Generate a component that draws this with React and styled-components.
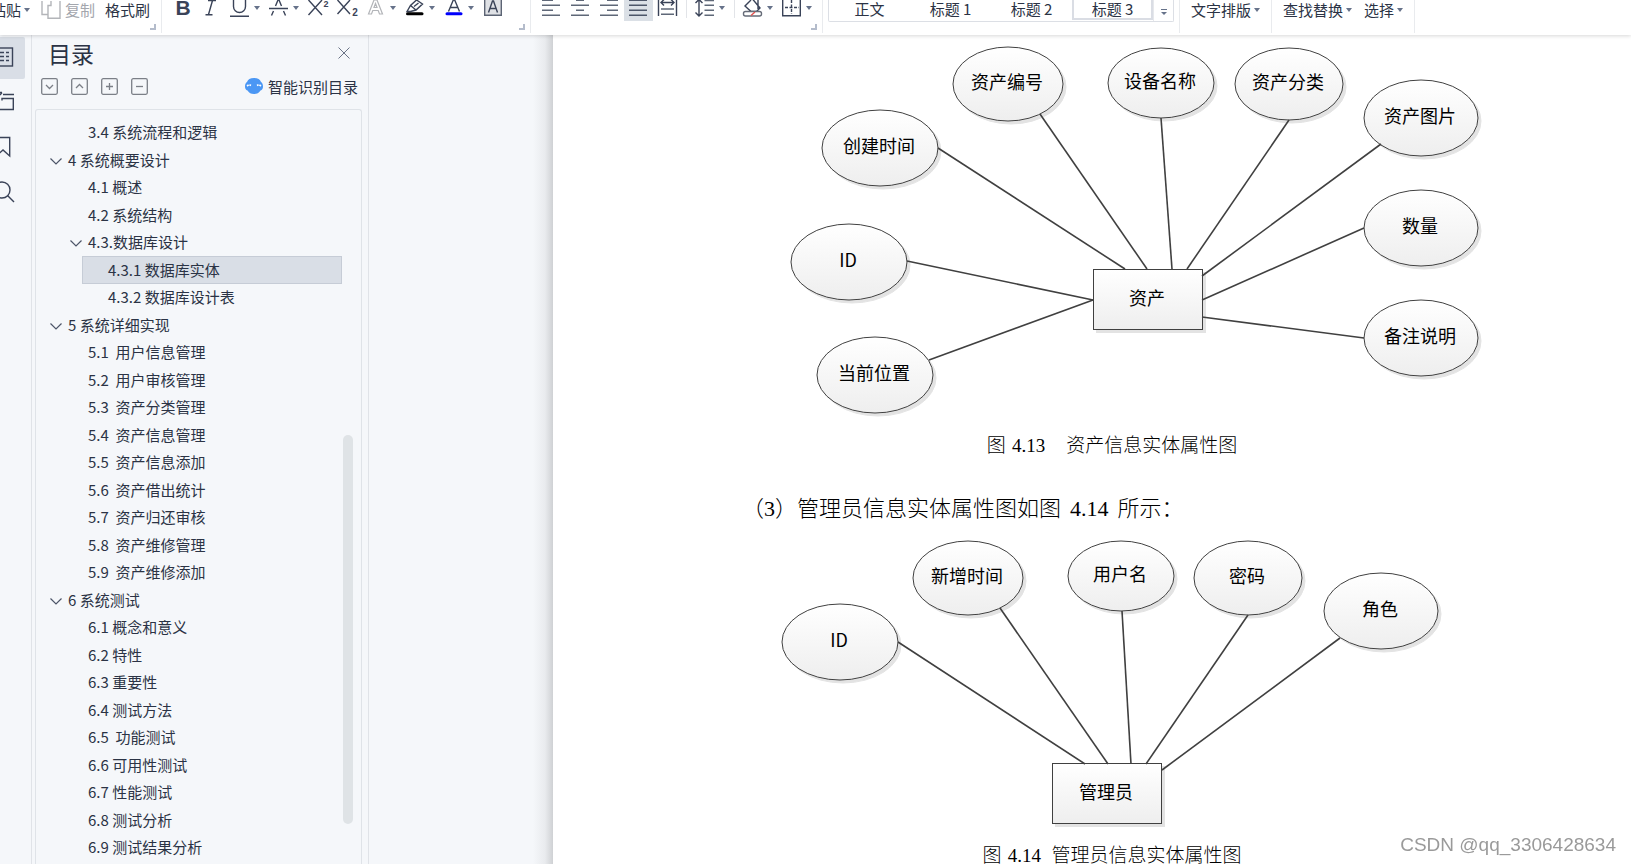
import React from 'react';
import styled, { createGlobalStyle } from 'styled-components';

const GlobalStyle = createGlobalStyle`
  * {
    box-sizing: border-box;
  }

  body {
    margin: 0;
    overflow: hidden;
    background: #f5f7fa;
    color: #2b3345;
    font-family: 'Noto Sans CJK SC', sans-serif;
    font-size: 15px;
  }

  button {
    font: inherit;
    color: inherit;
    background: none;
    border: none;
    padding: 0;
    margin: 0;
    cursor: pointer;
  }

  svg {
    display: block;
    flex: none;
  }
`;

const Main = styled.div`
  height: 100vh;
  display: flex;
  flex-direction: column;
  overflow: hidden;
`;

/* ---------- ribbon ---------- */

const Ribbon = styled.header`
  position: relative;
  z-index: 1;
  flex: none;
  display: flex;
  height: 35px;
  background: #fff;
  box-shadow: 0 1px 4px rgba(0, 0, 0, .16);
`;

const Group = styled.div`
  position: relative;
  display: flex;
  align-items: flex-start;
  height: 33px;
  padding-left: ${(props) => props.$start || 0}px;
  padding-right: ${(props) => props.$end || 0}px;
  border-right: 1px solid #e9ebee;
  white-space: nowrap;
`;

const Launcher = styled.button`
  position: absolute;
  right: 5px;
  bottom: 3px;
  width: 6px;
  height: 6px;
  border-right: 2px solid #b4bccb;
  border-bottom: 2px solid #b4bccb;
`;

const TextTool = styled.button`
  display: flex;
  align-items: center;
  gap: 3px;
  height: 20px;
  line-height: 20px;
  margin-right: ${(props) => props.$gap || 11}px;
  color: ${(props) => (props.disabled ? '#a3a6ad' : '#2b3345')};
`;

const PasteTool = styled(TextTool)`
  margin-left: -9px;
`;

const IconTool = styled.button`
  width: ${(props) => (props.$menu ? 39 : 29)}px;
  height: 21px;
  background: ${(props) => (props.$active ? '#dbe0e6' : 'none')};
`;

const Divider = styled.span`
  width: 1px;
  height: 18px;
  margin: 0 4px;
  background: #e2e4e8;
`;

const Gallery = styled.div`
  display: flex;
  height: 22px;
  border: 1px solid #dcdfe5;
  border-top: none;
  border-radius: 0 0 2px 2px;
`;

const StyleCell = styled.button`
  width: 81px;
  height: 20px;
  line-height: 18px;
  border: 2px solid ${(props) => (props.$active ? '#dadde4' : 'transparent')};
  border-top: none;
`;

const GalleryMore = styled.button`
  display: flex;
  justify-content: center;
  width: 20px;
  height: 21px;
  border-left: 1px solid #e6e8ec;
`;

const INK = '#3a4358';
const ARROW = '#66728a';

const Caret = () => (
  <svg width="6" height="4" viewBox="0 0 6 4">
    <path d="M0 0h6L3 4z" fill={ARROW} />
  </svg>
);

// Ribbon glyphs share a 21px tall canvas; the ones with a menu get the arrow on the right.
const Glyph = ({ menu, children }) => (
  <svg width={menu ? 39 : 29} height="21" fill="none" stroke={INK} strokeWidth="1.4">
    {children}
    {menu && <path d="M28 6h6l-3 4z" fill={ARROW} stroke="none" />}
  </svg>
);

const GlyphText = styled.text`
  font-family: 'Liberation Sans', sans-serif;
  font-size: ${(props) => props.$size}px;
  font-weight: 700;
  text-anchor: middle;
  fill: ${INK};
  stroke: none;
`;

const fontTools = [
  {
    label: '加粗',
    art: <GlyphText x="15" y="15" $size={21}>B</GlyphText>,
  },
  {
    label: '倾斜',
    art: <path d="M11 0.5h8M15.5 0.5L11.5 14.5M8.5 14.8h7" />,
  },
  {
    label: '下划线',
    menu: true,
    art: <path d="M7.5 0V6.5a6 6 0 0 0 12 0V0M4 16.3h19" />,
  },
  {
    label: '删除线',
    menu: true,
    art: <path d="M10.5 6L13 0h1l2.5 6M8.5 11L6.5 15.5M18.5 11l2 4.5M4 8.5h19" />,
  },
  {
    label: '上标',
    art: (
      <>
        <path d="M4.5 0L18 15M18 0L4.5 15" />
        <GlyphText x="22" y="7" $size={9}>2</GlyphText>
      </>
    ),
  },
  {
    label: '下标',
    art: (
      <>
        <path d="M4.5 0L17 14M17 0L4.5 14" />
        <GlyphText x="22" y="16" $size={10}>2</GlyphText>
      </>
    ),
  },
  {
    label: '文字效果',
    menu: true,
    art: <path d="M6.5 14L12 0h3l5.500 14h-3l-1.300-3.500h-5.400L9.500 14zM12 7.500h3l-1.500-4z" stroke="#b3b5b9" strokeWidth="1.2" />,
  },
  {
    label: '突出显示',
    menu: true,
    art: (
      <>
        <path d="M6 11.5L9.5 5.5L15.5 0L21.5 4L15 10L9.5 11.5zM9.500 5.500L15 10M13 6.500L17.500 3" />
        <path d="M6.5 13.7h14.5" stroke="#000" strokeWidth="3" strokeLinecap="round" />
      </>
    ),
  },
  {
    label: '字体颜色',
    menu: true,
    art: (
      <>
        <path d="M8.500 11.500L13.300 0h1.400l4.800 11.500M10.500 7.500h7" />
        <path d="M7 13.7h14" stroke="#0000fb" strokeWidth="3" strokeLinecap="round" />
      </>
    ),
  },
  {
    label: '字符底纹',
    art: (
      <>
        <path d="M5.7 -2V15.3H22.3V-2" fill="#dfe1e5" stroke="#5c6474" />
        <path d="M9.5 12.5L13.5 1h1l4 11.5M11 8.5h6" />
      </>
    ),
  },
];

const alignTools = [
  { label: '左对齐', art: <path d="M5 5.3h18M5 10.2h11M5 15.3h18M5 0.3h11" stroke="#5f6878" /> },
  { label: '居中对齐', art: <path d="M5 5.3h18M10 10.2h8M5 15.3h18M10 0.3h8" stroke="#5f6878" /> },
  { label: '右对齐', art: <path d="M5 5.3h18M12 10.2h11M5 15.3h18M12 0.3h11" stroke="#5f6878" /> },
  { label: '两端对齐', active: true, art: <path d="M5 0.3h18M5 5.3h18M5 10.2h18M5 15.3h18" stroke="#4d5669" /> },
  {
    label: '分散对齐',
    art: (
      <>
        <path d="M5.5 0V16M23.5 0V16M8 2.5h13M11 -0.5l-3 3l3 3M18 -0.5l3 3l-3 3" />
        <path d="M8 9h13M8 14.3h13" stroke="#5f6878" />
      </>
    ),
  },
];

const Tool = ({
  label, menu, active, art,
}) => (
  <IconTool aria-label={label} $menu={menu} $active={active}>
    <Glyph menu={menu}>{art}</Glyph>
  </IconTool>
);

/* ---------- side rail and outline ---------- */

const Workspace = styled.div`
  flex: 1;
  min-height: 0;
  display: grid;
  grid-template-columns: 31px 338px 184px minmax(0, 1fr);
`;

const Rail = styled.nav`
  display: flex;
  flex-direction: column;
  gap: 3px;
  padding-top: 2px;
`;

const RailButton = styled.button`
  width: 25px;
  height: 42px;
  border-radius: 0 2px 2px 0;
  background: ${(props) => (props.$active ? '#d9dee6' : 'none')};
`;

const Panel = styled.aside`
  display: flex;
  flex-direction: column;
  min-height: 0;
  border-left: 1px solid #e0e3e8;
  border-right: 1px solid #e0e3e8;
`;

const PanelHead = styled.div`
  display: flex;
  justify-content: space-between;
  align-items: center;
  height: 36px;
  padding: 0 18px 0 16px;
`;

const Title = styled.h2`
  margin: 0;
  font-size: 23px;
  font-weight: 400;
  line-height: 36px;
`;

const PanelTools = styled.div`
  display: flex;
  align-items: center;
  gap: 13px;
  height: 30px;
  padding: 0 10px 0 9px;
`;

const SmartButton = styled.button`
  display: flex;
  align-items: center;
  gap: 5px;
  margin-left: auto;
`;

const Outline = styled.div`
  flex: 1;
  min-height: 0;
  display: flex;
  margin: 8px 6px 0 3px;
  padding: 9px 8px 0 6px;
  border: 1px solid #dfe3e8;
  border-bottom: none;
  border-radius: 3px 3px 0 0;
`;

const Tree = styled.ul`
  flex: 1;
  margin: 0;
  padding: 0;
  list-style: none;
`;

const Row = styled.li`
  display: flex;
  height: 27px;
  padding-left: ${(props) => (props.$level - 1) * 20}px;

  &:nth-child(even) {
    height: 28px;
  }
`;

const RowButton = styled.button`
  flex: 1;
  display: flex;
  align-items: center;
  gap: 6px;
  padding: 0 0 1px 7px;
  line-height: 24px;
  white-space: pre;
  text-align: left;
  background: ${(props) => (props.$selected ? '#d9dee6' : 'none')};
  border: 1px solid ${(props) => (props.$selected ? '#c6ccd6' : 'transparent')};
`;

const Track = styled.div`
  width: 10px;
  margin-left: 1px;
  padding: 316px 0 40px;
`;

const Thumb = styled.div`
  height: 100%;
  border-radius: 5px;
  background: #dfe3e6;
`;

const outline = [
  { level: 2, text: '3.4 系统流程和逻辑' },
  { level: 1, text: '4 系统概要设计', open: true },
  { level: 2, text: '4.1 概述' },
  { level: 2, text: '4.2 系统结构' },
  { level: 2, text: '4.3.数据库设计', open: true },
  { level: 3, text: '4.3.1 数据库实体', selected: true },
  { level: 3, text: '4.3.2 数据库设计表' },
  { level: 1, text: '5 系统详细实现', open: true },
  { level: 2, text: '5.1  用户信息管理' },
  { level: 2, text: '5.2  用户审核管理' },
  { level: 2, text: '5.3  资产分类管理' },
  { level: 2, text: '5.4  资产信息管理' },
  { level: 2, text: '5.5  资产信息添加' },
  { level: 2, text: '5.6  资产借出统计' },
  { level: 2, text: '5.7  资产归还审核' },
  { level: 2, text: '5.8  资产维修管理' },
  { level: 2, text: '5.9  资产维修添加' },
  { level: 1, text: '6 系统测试', open: true },
  { level: 2, text: '6.1 概念和意义' },
  { level: 2, text: '6.2 特性' },
  { level: 2, text: '6.3 重要性' },
  { level: 2, text: '6.4 测试方法' },
  { level: 2, text: '6.5  功能测试' },
  { level: 2, text: '6.6 可用性测试' },
  { level: 2, text: '6.7 性能测试' },
  { level: 2, text: '6.8 测试分析' },
  { level: 2, text: '6.9 测试结果分析' },
];

const boxTools = [
  { label: '展开', d: 'M5 7l3.5 3.5L12 7' },
  { label: '收起', d: 'M5 10l3.5-3.5L12 10' },
  { label: '增加级别', d: 'M5 8.5h7M8.5 5v7' },
  { label: '减少级别', d: 'M5 8.5h7' },
];

/* ---------- document page ---------- */

const Gutter = styled.div`
  background: linear-gradient(to left, #cfd1d4 0, #e9ebee 8px, #f5f7fa 20px);
`;

const Page = styled.main`
  overflow: hidden;
  display: flex;
  flex-direction: column;
  align-items: center;
  padding-left: 40px;
  background: #fff;
  color: #000;
`;

const Caption = styled.p`
  flex: none;
  margin: 0;
  font-size: 19px;
  font-weight: 300;
  line-height: 38px;
  white-space: pre;
`;

const Paragraph = styled.p`
  flex: none;
  width: 740px;
  margin: 24px 0 4px;
  font-size: 22px;
  font-weight: 300;
  line-height: 38px;
`;

const Num = styled.span`
  font-family: 'Liberation Serif', serif;
  line-height: 1;
  margin: 0 ${(props) => props.$gap || 0}px;
`;

const Label = styled.text`
  font-size: 18px;
  text-anchor: middle;
  fill: #000;
`;

const Watermark = styled.div`
  position: fixed;
  right: 15px;
  bottom: 7px;
  font-family: 'Liberation Sans', sans-serif;
  font-size: 19px;
  line-height: 24px;
  color: #9a9a9a;
  text-shadow: 1px 1px 0 #fff;
`;

const assetNodes = [
  { text: '资产编号', x: 276, y: 49, rx: 55, ry: 37 },
  { text: '设备名称', x: 429, y: 48, rx: 53, ry: 35 },
  { text: '资产分类', x: 557, y: 49, rx: 54, ry: 36 },
  { text: '创建时间', x: 148, y: 113, rx: 58, ry: 38 },
  { text: 'ID', x: 117, y: 227, rx: 58, ry: 38 },
  { text: '当前位置', x: 143, y: 340, rx: 58, ry: 38 },
  { text: '资产图片', x: 689, y: 83, rx: 57, ry: 38 },
  { text: '数量', x: 689, y: 193, rx: 57, ry: 38 },
  { text: '备注说明', x: 689, y: 303, rx: 57, ry: 38 },
];

const assetLinks = [
  [206, 113, 393, 234],
  [308, 79, 415, 234],
  [175, 226, 361, 265],
  [197, 325, 361, 265],
  [429, 83, 440, 234],
  [557, 85, 455, 234],
  [649, 109, 470, 241],
  [632, 193, 470, 265],
  [632, 303, 470, 282],
];

const adminNodes = [
  { text: 'ID', x: 108, y: 113, rx: 58, ry: 38 },
  { text: '新增时间', x: 236, y: 49, rx: 55, ry: 37 },
  { text: '用户名', x: 389, y: 47, rx: 53, ry: 35 },
  { text: '密码', x: 516, y: 49, rx: 54, ry: 37 },
  { text: '角色', x: 649, y: 82, rx: 57, ry: 38 },
];

const adminLinks = [
  [166, 113, 353, 235],
  [268, 79, 376, 235],
  [390, 82, 399, 235],
  [516, 86, 414, 235],
  [608, 109, 430, 241],
];

const Diagram = ({
  id, height, entity, nodes, links,
}) => (
  <svg width="760" height={height} role="img" aria-label={entity.text}>
    <defs>
      <linearGradient id={`${id}-fill`} x1="0" y1="0" x2="0" y2="1">
        <stop offset="0" stopColor="#fff" />
        <stop offset="1" stopColor="#eee" />
      </linearGradient>
      <filter id={`${id}-shadow`} x="-10%" y="-10%" width="125%" height="125%">
        <feDropShadow dx="3" dy="3" stdDeviation="0.6" floodColor="#000" floodOpacity="0.11" />
      </filter>
    </defs>
    <g fill={`url(#${id}-fill)`} stroke="#404040" strokeWidth="1">
      {nodes.map((node) => (
        <ellipse
          key={node.text}
          cx={node.x}
          cy={node.y}
          rx={node.rx}
          ry={node.ry}
          filter={`url(#${id}-shadow)`}
        />
      ))}
      <rect
        x={entity.x + 0.5}
        y={entity.y + 0.5}
        width="109"
        height="60"
        filter={`url(#${id}-shadow)`}
      />
    </g>
    <g stroke="#404040" strokeWidth="1.6">
      {links.map(([x1, y1, x2, y2]) => (
        <line key={`${x1}-${y1}`} x1={x1} y1={y1} x2={x2} y2={y2} />
      ))}
    </g>
    {nodes.map((node) => (
      <Label key={node.text} x={node.x - 1} y={node.y + 5}>{node.text}</Label>
    ))}
    <Label x={entity.x + 54} y={entity.y + 36}>{entity.text}</Label>
  </svg>
);

const App = () => (
  <Main>
    <GlobalStyle />
    <Ribbon>
      <Group>
        <PasteTool>
          粘贴
          <Caret />
        </PasteTool>
        <TextTool disabled $gap={10}>
          <svg width="21" height="19" fill="#fff" stroke="#b3b5b9" strokeWidth="1.4">
            <path d="M1 -2V13.5H13V-2z" />
            <path d="M7 17.3V4.5H10V-2H19V17.3z" />
          </svg>
          复制
        </TextTool>
        <TextTool>格式刷</TextTool>
        <Launcher aria-label="剪贴板设置" />
      </Group>

      <Group $start={6} $end={22}>
        {fontTools.map((tool) => <Tool key={tool.label} {...tool} />)}
        <Launcher aria-label="字体设置" />
      </Group>

      <Group $start={6} $end={5}>
        {alignTools.map((tool) => <Tool key={tool.label} {...tool} />)}
        <Divider />
        <Tool
          label="行距"
          menu
          art={(
            <>
              <path d="M8 -2V15.5M4.5 12.5L8 16l3.5-3.5M4.5 3L8 -0.5L11.5 3" />
              <path d="M13.5 0.5H23M13.5 5.3H23M13.5 10.2H23M13.5 15.3H23" stroke="#5f6878" />
            </>
          )}
        />
        <Divider />
        <Tool
          label="底纹颜色"
          menu
          art={(
            <>
              <path d="M12 0L6 6l6 5.5h5.5L21 8L13.5 -1M19 0v9" />
              <rect x="4.5" y="11.5" width="18" height="4.5" rx="2" fill="#fff" stroke="#666c78" />
              <path d="M12 15.5L16 12" stroke="#e0524f" />
            </>
          )}
        />
        <Tool
          label="边框"
          menu
          art={(
            <>
              <path d="M4.7 -1V15.8H22.3V-1" />
              <path d="M13.5 0V14M7 7.5h14" strokeDasharray="3 1.5" />
            </>
          )}
        />
        <Launcher aria-label="段落设置" />
      </Group>

      <Group $start={5} $end={5}>
        <Gallery>
          <StyleCell>正文</StyleCell>
          <StyleCell>标题 1</StyleCell>
          <StyleCell>标题 2</StyleCell>
          <StyleCell $active>标题 3</StyleCell>
          <GalleryMore aria-label="更多样式">
            <svg width="8" height="17">
              <path d="M1 9.5h6" stroke={ARROW} />
              <path d="M1 12h6l-3 3z" fill={ARROW} />
            </svg>
          </GalleryMore>
        </Gallery>
      </Group>

      <Group $start={11}>
        <TextTool>
          文字排版
          <Caret />
        </TextTool>
      </Group>
      <Group $start={11}>
        <TextTool $gap={12}>
          查找替换
          <Caret />
        </TextTool>
        <TextTool>
          选择
          <Caret />
        </TextTool>
      </Group>
    </Ribbon>

    <Workspace>
      <Rail>
        <RailButton $active aria-label="目录">
          <svg width="25" height="42" fill="none" stroke={INK} strokeWidth="1.4">
            <rect x="-6" y="11" width="18.5" height="18" />
            <path d="M-2 15.5h6M6 15.5h3M-2 19.5h6M6 19.5h3M-2 23.5h6M6 23.5h3" />
          </svg>
        </RailButton>
        <RailButton aria-label="章节">
          <svg width="25" height="42" fill="none" stroke={INK} strokeWidth="1.4">
            <path d="M3 12.5h11M-1 10.5h3M0 13L2 10.5M2 18.5V16.5H13.3V27.5H-1" />
          </svg>
        </RailButton>
        <RailButton aria-label="书签">
          <svg width="25" height="42" fill="none" stroke={INK} strokeWidth="1.4">
            <path d="M-4 10.5H9.7V29L3 23L-4 29z" />
          </svg>
        </RailButton>
        <RailButton aria-label="查找">
          <svg width="25" height="42" fill="none" stroke={INK} strokeWidth="1.4">
            <circle cx="2" cy="18" r="8" />
            <path d="M7.5 23.5L14 30" />
          </svg>
        </RailButton>
      </Rail>

      <Panel>
        <PanelHead>
          <Title>目录</Title>
          <button aria-label="关闭">
            <svg width="12" height="12" stroke="#6a7386" strokeWidth="1">
              <path d="M0.5 0.5l11 11M11.5 0.5l-11 11" />
            </svg>
          </button>
        </PanelHead>
        <PanelTools>
          {boxTools.map((tool) => (
            <button key={tool.label} aria-label={tool.label}>
              <svg width="17" height="17" fill="none" stroke="#7b7f87" strokeWidth="1.3">
                <rect x="0.7" y="0.7" width="15.6" height="15.6" rx="1.5" />
                <path d={tool.d} />
              </svg>
            </button>
          ))}
          <SmartButton>
            <svg width="18" height="16">
              <path d="M9 0c4 0 6 1.5 7 4c1.5 1 2 2.5 2 4.500s-.8 3.500-2.500 4C14 15 12 16 9 16s-5-1-6.500-3.500C.8 12 0 10.500 0 8.500S.5 5 2 4C3 1.500 5 0 9 0z" fill="#4b97f4" />
              <path d="M2 8l2-1.500l2 1M16 8l-2-1.500l-2 1" fill="none" stroke="#fff" strokeWidth="1.6" strokeDasharray="2 1" />
            </svg>
            智能识别目录
          </SmartButton>
        </PanelTools>
        <Outline>
          <Tree>
            {outline.map((row) => (
              <Row key={row.text} $level={row.level}>
                <RowButton $selected={row.selected} aria-expanded={row.open}>
                  <svg width="12" height="6" fill="none" stroke="#4c5568" strokeWidth="1.2" overflow="visible">
                    {row.open && <path d="M0.5 1.5l5.5 5.5l5.5-5.5" />}
                  </svg>
                  {row.text}
                </RowButton>
              </Row>
            ))}
          </Tree>
          <Track>
            <Thumb />
          </Track>
        </Outline>
      </Panel>

      <Gutter />

      <Page>
        <Diagram
          id="asset"
          height={390}
          entity={{ text: '资产', x: 361, y: 234 }}
          nodes={assetNodes}
          links={assetLinks}
        />
        <Caption>
          图
          {' '}
          <Num $gap={2}>4.13</Num>
          {'　'}
          资产信息实体属性图
        </Caption>
        <Paragraph>
          （
          <Num>3</Num>
          ）管理员信息实体属性图如图
          <Num $gap={9}>4.14</Num>
          所示：
        </Paragraph>
        <Diagram
          id="admin"
          height={306}
          entity={{ text: '管理员', x: 320, y: 234 }}
          nodes={adminNodes}
          links={adminLinks}
        />
        <Caption>
          图
          {' '}
          <Num $gap={2}>4.14</Num>
          {'  '}
          管理员信息实体属性图
        </Caption>
      </Page>
    </Workspace>
    <Watermark>CSDN @qq_3306428634</Watermark>
  </Main>
);

export default App;
